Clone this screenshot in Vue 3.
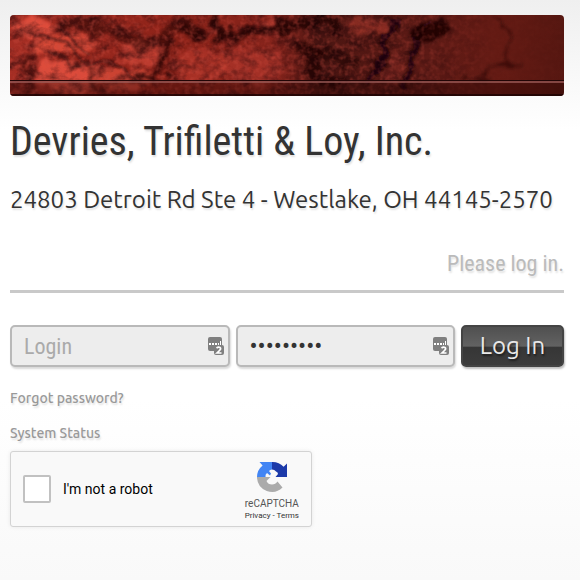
<script setup>
import { ref } from "vue";

const login = ref("");
const password = ref("password1");
const notRobot = ref(false);

// dark veins of the stone: path, stroke width, opacity
const veins = [
  { d: "M22 36 Q12 52 22 78 M78 50 Q84 62 82 76", w: 8, o: 0.5 },
  { d: "M54 12 Q78 4 112 20 T156 18 Q184 4 190 26", w: 13, o: 0.5 },
  { d: "M164 24 Q150 40 154 56 Q140 70 122 60", w: 7, o: 0.7 },
  { d: "M204 2 Q208 24 224 22 T248 12 Q268 26 280 8", w: 10, o: 0.8 },
  { d: "M170 4 Q182 30 192 12", w: 8, o: 0.6 },
  { d: "M274 2 Q292 18 306 6 T328 20 M284 28 Q316 40 300 58 Q316 74 340 64", w: 10, o: 0.75 },
  { d: "M300 40 Q330 30 342 54", w: 14, o: 0.5 },
  { d: "M390 6 Q370 20 372 36 T356 68 M420 6 Q402 24 402 44 T394 70", w: 7, o: 1 },
  { d: "M404 16 Q426 26 438 8", w: 13, o: 0.9 },
  { d: "M480 2 Q504 10 496 32 T512 48 Q482 52 456 66", w: 3, o: 0.55 },
];

// fine cracks, drawn sharper than the veins
const cracks = [
  "M24 20 Q39 19 49 25 T66 41 T80 46",
  "M38 35 Q50 39 58 47 T84 49 T116 57 T130 67",
  "M50 13 Q64 31 82 39",
];

const glows = [
  { cx: 24, cy: 13, rx: 22, ry: 9, o: 0.85 },
  { cx: 55, cy: 29, rx: 33, ry: 9, o: 0.75 },
  { cx: 58, cy: 60, rx: 32, ry: 17, o: 0.85 },
  { cx: 114, cy: 64, rx: 28, ry: 12, o: 0.65 },
  { cx: 132, cy: 38, rx: 22, ry: 13, o: 0.5 },
  { cx: 190, cy: 52, rx: 28, ry: 17, o: 0.3 },
  { cx: 240, cy: 50, rx: 34, ry: 20, o: 0.3 },
  { cx: 258, cy: 8, rx: 12, ry: 6, o: 0.5 },
  { cx: 358, cy: 12, rx: 20, ry: 9, o: 0.35 },
  { cx: 384, cy: 56, rx: 8, ry: 18, o: 0.15 },
];
</script>

<template>
  <main class="page">
    <header class="banner">
      <svg viewBox="0 0 554 81" preserveAspectRatio="none" aria-hidden="true">
        <defs>
          <linearGradient id="stone">
            <stop offset="0" stop-color="#a52e24" />
            <stop offset="0.3" stop-color="#8c2218" />
            <stop offset="0.48" stop-color="#84231b" />
            <stop offset="0.56" stop-color="#4c1612" />
            <stop offset="0.75" stop-color="#5c1a15" />
            <stop offset="0.88" stop-color="#651b14" />
            <stop offset="1" stop-color="#561711" />
          </linearGradient>
          <linearGradient id="grainFade">
            <stop offset="0" stop-color="#fff" />
            <stop offset="0.7" stop-color="#bbb" />
            <stop offset="0.88" stop-color="#111" />
          </linearGradient>
          <mask id="grainMask">
            <rect width="554" height="81" fill="url(#grainFade)" />
          </mask>
          <filter id="warp" x="-5%" y="-20%" width="110%" height="140%">
            <feTurbulence type="fractalNoise" baseFrequency="0.07" numOctaves="3" seed="4" result="n" />
            <feDisplacementMap in="SourceGraphic" in2="n" scale="20" xChannelSelector="R" yChannelSelector="G" />
            <feGaussianBlur stdDeviation="1.8" />
          </filter>
          <filter id="soft" x="-5%" y="-20%" width="110%" height="140%">
            <feTurbulence type="fractalNoise" baseFrequency="0.06" numOctaves="2" seed="9" result="n" />
            <feDisplacementMap in="SourceGraphic" in2="n" scale="10" xChannelSelector="R" yChannelSelector="G" />
            <feGaussianBlur stdDeviation="1" />
          </filter>
          <filter id="grain" x="0" y="0" width="100%" height="100%" color-interpolation-filters="sRGB">
            <feTurbulence type="fractalNoise" baseFrequency="0.07 0.09" numOctaves="4" seed="11" />
            <feColorMatrix values="0 0 0 0 0.1  0 0 0 0 0.01  0 0 0 0 0.03  2.4 0 0 0 -0.95" />
          </filter>
          <filter id="fleck" x="0" y="0" width="100%" height="100%" color-interpolation-filters="sRGB">
            <feTurbulence type="fractalNoise" baseFrequency="0.2" numOctaves="2" seed="7" />
            <feColorMatrix values="0 0 0 0 0.8  0 0 0 0 0.3  0 0 0 0 0.25  0 2.4 0 0 -1" />
            <feGaussianBlur stdDeviation="0.5" />
          </filter>
        </defs>
        <rect width="554" height="81" fill="url(#stone)" />
        <g filter="url(#warp)" fill="#e8513f">
          <ellipse
            v-for="(g, i) in glows"
            :key="i"
            :cx="g.cx"
            :cy="g.cy"
            :rx="g.rx"
            :ry="g.ry"
            :opacity="g.o"
          />
        </g>
        <g filter="url(#warp)" fill="none" stroke="#1c0507">
          <path v-for="(v, i) in veins" :key="i" :d="v.d" :stroke-width="v.w" :opacity="v.o" />
        </g>
        <g filter="url(#soft)" fill="none" stroke="#35090a" stroke-width="3" opacity="0.6">
          <path v-for="d in cracks" :key="d" :d="d" />
        </g>
        <g mask="url(#grainMask)">
          <rect width="554" height="81" filter="url(#grain)" opacity="0.55" />
          <rect width="554" height="81" filter="url(#fleck)" opacity="0.45" />
        </g>
        <rect y="68" width="554" height="13" fill="#200404" opacity="0.35" />
        <rect y="65" width="554" height="1" fill="#210505" />
        <rect y="66" width="554" height="2" fill="#8f5350" opacity="0.8" />
        <rect y="79" width="554" height="2" fill="#1b0303" opacity="0.8" />
      </svg>
    </header>

    <h1>Devries, Trifiletti &amp; Loy, Inc.</h1>
    <h2>24803 Detroit Rd Ste 4 - Westlake, OH 44145-2570</h2>
    <p class="prompt">Please log in.</p>

    <form @submit.prevent>
      <div class="row">
        <div class="field">
          <input v-model="login" type="text" placeholder="Login" aria-label="Login" />
          <svg class="manager" viewBox="0 0 17 19" aria-hidden="true">
            <path d="M2 0H12Q14 0 14 2V14H2Q0 14 0 12V2Q0 0 2 0Z" fill="#7f7f7f" />
            <path d="M1 6h2v2H1zM4 6h2v2H4zM7 6h2v2H7zM10 6h1v2h-1zM12 4h1v4h-1z" fill="#fff" />
            <rect x="6" y="8" width="10" height="10" rx="2" fill="#7f7f7f" />
            <path d="M8.5 11Q10.5 9.5 12 10.5T11.5 13.5L9 16H13.5" fill="none" stroke="#fff" stroke-width="1.7" />
          </svg>
        </div>
        <div class="field">
          <input v-model="password" type="password" aria-label="Password" />
          <svg class="manager" viewBox="0 0 17 19" aria-hidden="true">
            <path d="M2 0H12Q14 0 14 2V14H2Q0 14 0 12V2Q0 0 2 0Z" fill="#7f7f7f" />
            <path d="M1 6h2v2H1zM4 6h2v2H4zM7 6h2v2H7zM10 6h1v2h-1zM12 4h1v4h-1z" fill="#fff" />
            <rect x="6" y="8" width="10" height="10" rx="2" fill="#7f7f7f" />
            <path d="M8.5 11Q10.5 9.5 12 10.5T11.5 13.5L9 16H13.5" fill="none" stroke="#fff" stroke-width="1.7" />
          </svg>
        </div>
        <button type="submit">Log In</button>
      </div>

      <nav class="links">
        <a href="#forgot">Forgot password?</a>
        <a href="#status">System Status</a>
      </nav>

      <div class="captcha">
        <label>
          <input v-model="notRobot" type="checkbox" />
          <span>I'm not a robot</span>
        </label>
        <div class="brand">
          <svg viewBox="0 0 32 32" aria-hidden="true">
            <path d="M31 16V2.5L27.6 5.8A15 15 0 0 0 16 1V8.5Q18.5 8.5 20 10.5Q22 11 22 13L19.5 16Z" fill="#1c3aa9" />
            <path d="M16 1H3.5L6.6 4.4A15 15 0 0 0 1 16H9.5Q9 13.5 11 12L14 14.5L15 12.5L13 10Q14 8.5 16 8.5Z" fill="#4285f4" />
            <path d="M1 16V17A15 15 0 0 0 26.5 26.5L21.5 20.5Q19.5 23.5 16 23.5Q12 23.5 10.5 20L14.5 16Z" fill="#ababab" />
          </svg>
          <div class="name">reCAPTCHA</div>
          <div class="terms"><a href="#privacy">Privacy</a> - <a href="#terms">Terms</a></div>
        </div>
      </div>
    </form>
  </main>
</template>

<style>
body {
  margin: 0;
}
</style>

<style scoped>
.page {
  box-sizing: border-box;
  min-height: 100vh;
  padding: 15px 16px 16px 10px;
  background: linear-gradient(#efefef, #fff 130px, #fff 400px, #f9f9f9);
  color: #333;
  font-family: Ubuntu, "Noto Sans", sans-serif;
  text-shadow: 1px 2px 2px rgba(0, 0, 0, 0.12);
}
.banner {
  height: 81px;
  overflow: hidden;
  border-radius: 4px;
}
.banner svg {
  display: block;
  width: 100%;
  height: 100%;
}
h1,
.prompt,
.field input {
  font-family: "Ubuntu Condensed", "Roboto Condensed", "Liberation Sans Narrow", "Noto Sans", sans-serif;
}
h1 {
  margin: 20px 0 0;
  font-size: 40px;
  font-weight: 400;
  line-height: 52px;
}
h2 {
  margin: 16px 0 0;
  font-size: 24px;
  font-weight: 400;
  line-height: 32px;
  white-space: nowrap;
}
.prompt {
  margin: 32px 0 0;
  padding-bottom: 10px;
  border-bottom: 3px solid #c9c9c9;
  color: #bbb;
  font-size: 22px;
  line-height: 32px;
  text-align: right;
}
.row {
  display: flex;
  gap: 6px;
  margin-top: 32px;
}
.field {
  position: relative;
  flex: 1;
  min-width: 0;
}
.field input {
  box-sizing: border-box;
  width: 100%;
  height: 42px;
  padding: 0 32px 0 12px;
  border: 2px solid #b9b9b9;
  border-radius: 5px;
  background: #ededed;
  box-shadow: 1px 2px 2px rgba(0, 0, 0, 0.15);
  color: #333;
  font-size: 22px;
  outline: none;
}
.field input[type="password"] {
  font-size: 24px;
}
.field input::placeholder {
  color: #aaa;
}
.manager {
  position: absolute;
  top: 12px;
  right: 5px;
  width: 17px;
  height: 19px;
}
button {
  flex: none;
  width: 103px;
  height: 42px;
  padding: 0;
  border: 2px solid #444;
  border-radius: 5px;
  background: linear-gradient(#505050, #626262 50%, #363636 54%, #3c3c3c);
  box-shadow: 1px 2px 2px rgba(0, 0, 0, 0.25);
  color: #e8e8e8;
  font-family: Ubuntu, "Noto Sans", sans-serif;
  font-size: 24px;
  line-height: 32px;
  text-shadow: 1px 2px 2px rgba(0, 0, 0, 0.5);
}
.links {
  display: flex;
  flex-direction: column;
  align-items: flex-start;
  gap: 15px;
  margin-top: 21px;
  font-size: 14px;
  font-weight: 500;
  line-height: 20px;
}
.links a {
  color: #999;
  text-decoration: none;
}
.captcha {
  box-sizing: border-box;
  display: flex;
  align-items: center;
  justify-content: space-between;
  width: 302px;
  height: 76px;
  margin-top: 8px;
  padding: 0 12px;
  border: 1px solid #d3d3d3;
  border-radius: 3px;
  background: #f9f9f9;
  box-shadow: 0 0 4px rgba(0, 0, 0, 0.08);
  color: #000;
  font-family: Roboto, sans-serif;
  text-shadow: none;
}
.captcha label {
  display: flex;
  align-items: center;
  gap: 12px;
  font-size: 14px;
}
.captcha input {
  box-sizing: border-box;
  width: 28px;
  height: 28px;
  margin: 0;
  border: 2px solid #c1c1c1;
  border-radius: 2px;
  background: #fff;
  appearance: none;
}
.captcha input:checked {
  background: #4285f4;
}
.brand {
  padding-top: 4px;
  color: #555;
  text-align: center;
}
.brand svg {
  display: block;
  width: 32px;
  height: 32px;
  margin: 0 auto 4px;
}
.name {
  font-size: 10px;
  line-height: 13px;
}
.terms {
  color: #333;
  font-size: 8px;
  line-height: 12px;
}
.terms a {
  color: #333;
  text-decoration: none;
}
</style>
